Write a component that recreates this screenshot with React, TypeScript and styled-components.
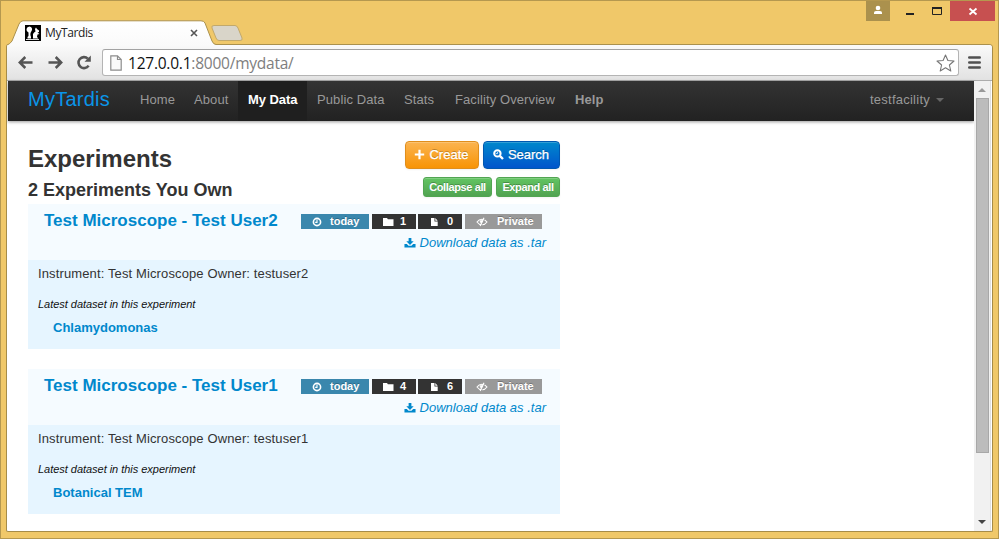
import React from "react";
import styled, { createGlobalStyle } from "styled-components";

const Global = createGlobalStyle`
  * { box-sizing: border-box; }
  html, body { margin: 0; padding: 0; }
  body { overflow: hidden; font-family: "Liberation Sans", Arial, sans-serif; font-size: 13px; color: #333; }
  svg { display: block; flex: none; }
`;

const Window = styled.div`
  width: 999px;
  height: 539px;
  display: flex;
  flex-direction: column;
  padding: 0 5px 6px 5px;
  background: #f0c869;
  border: 1px solid #b5984f;
`;

const TitleBar = styled.header`
  height: 43px;
  flex: none;
  display: flex;
  justify-content: space-between;
  align-items: flex-start;
`;

const Tabs = styled.div`
  display: flex;
  align-items: flex-start;
  height: 44px;
  padding-top: 19px;
  position: relative;
  z-index: 2;
`;

const Tab = styled.div`
  position: relative;
  width: 209px;
  height: 25px;
  display: flex;
  align-items: center;
  padding: 0 17px 0 19px;
`;

const TabShape = styled.svg`
  position: absolute;
  left: 0;
  top: 0;
  z-index: -1;
`;

const TabTitle = styled.span`
  flex: 1;
  margin-left: 4px;
  font: 12px "Open Sans", "Noto Sans", sans-serif;
  letter-spacing: -0.4px;
  color: #222;
`;

const WindowControls = styled.div`
  display: flex;
  height: 20px;
  margin-right: -2px;
`;

const Control = styled.div<{ $w: number; $bg?: string }>`
  width: ${(p) => p.$w}px;
  height: 20px;
  background: ${(p) => p.$bg || "transparent"};
`;

const Frame = styled.div`
  flex: 1;
  min-height: 0;
  width: 987px;
  display: flex;
  flex-direction: column;
  border: 1px solid #a68c48;
  border-top-color: #ab914d;
  border-radius: 3px 4px 2px 2px;
  background: #fff;
  padding: 0 0 0 1px;
  overflow: hidden;
`;

const Toolbar = styled.div`
  height: 36px;
  flex: none;
  margin-left: -1px;
  display: flex;
  align-items: flex-start;
  padding: 4px 11px 0 11px;
  background: linear-gradient(#fafafa, #e2e2e2);
  border-bottom: 1px solid #acacac;
`;

const NavIcons = styled.div`
  display: flex;
  gap: 13px;
  padding-top: 6px;
  width: 84px;
`;

const AddressBar = styled.div`
  flex: 1;
  height: 27px;
  display: flex;
  align-items: center;
  padding: 0 3px 0 7px;
  background: #fff;
  border: 1px solid #b4b4b4;
  border-top-color: #a3a3a3;
  border-radius: 3px;
`;

const Url = styled.span`
  flex: 1;
  margin-left: 6px;
  font: 15.5px/24px "Open Sans", "Noto Sans", sans-serif;
  letter-spacing: -0.23px;
  color: #7e7e7e;
  b { font-weight: 400; color: #111; }
`;

const MenuButton = styled.div`
  padding: 7px 0 0 9px;
`;

const Viewport = styled.div`
  flex: 1;
  min-height: 0;
  display: flex;
`;

const Page = styled.main`
  width: 966px;
`;

const NavBar = styled.nav`
  height: 40px;
  display: flex;
  align-items: stretch;
  padding: 0 30px 0 20px;
  background: linear-gradient(#333, #222);
  box-shadow: 0 1px 3px rgba(0, 0, 0, 0.4);
`;

const Brand = styled.a`
  width: 102px;
  font-size: 20px;
  line-height: 36px;
  letter-spacing: 0.25px;
  color: #0a95e8;
`;

const NavItem = styled.a<{ $w: number; $active?: boolean; $bold?: boolean }>`
  width: ${(p) => p.$w}px;
  padding-left: 10px;
  line-height: 37px;
  white-space: nowrap;
  letter-spacing: ${(p) => (p.$active ? -0.05 : 0.1)}px;
  font-weight: ${(p) => (p.$bold || p.$active ? 700 : 400)};
  color: ${(p) => (p.$active ? "#fff" : "#999")};
  background: ${(p) => (p.$active ? "#1f1f1f" : "transparent")};
`;

const UserMenu = styled.a`
  margin-left: auto;
  display: flex;
  gap: 6px;
  line-height: 37px;
  letter-spacing: 0.25px;
  color: #999;
`;

const Caret = styled.i`
  margin-top: 17px;
  width: 0;
  height: 0;
  border: 4px solid transparent;
  border-top-color: #666;
  border-bottom: 0;
`;

const Content = styled.section`
  width: 532px;
  margin: 20px 0 0 20px;
`;

const HeadRow = styled.div<{ $h: number }>`
  height: ${(p) => p.$h}px;
  display: flex;
  justify-content: space-between;
  align-items: flex-start;
`;

const Title = styled.h1`
  margin: 0;
  font-size: 24px;
  line-height: 35px;
`;

const SubTitle = styled.h2`
  margin: 0;
  font-size: 18px;
  line-height: 26px;
`;

const ButtonGroup = styled.div`
  display: flex;
  gap: 4px;
`;

const Button = styled.button<{ $w: number; $from: string; $to: string; $line: string }>`
  width: ${(p) => p.$w}px;
  height: 28px;
  padding: 0 1px 2px 0;
  display: flex;
  align-items: center;
  justify-content: center;
  gap: 4px;
  border: 1px solid ${(p) => p.$line};
  border-radius: 4px;
  background: linear-gradient(${(p) => p.$from}, ${(p) => p.$to});
  box-shadow: inset 0 1px 0 rgba(255, 255, 255, 0.2), 0 1px 2px rgba(0, 0, 0, 0.05);
  font: 13px "Liberation Sans", Arial, sans-serif;
  -webkit-text-stroke: 0.25px #fff;
  color: #fff;
  text-shadow: 0 -1px 0 rgba(0, 0, 0, 0.25);
`;

const SmallButton = styled(Button)`
  height: 20px;
  padding: 0 0 1px;
  border-radius: 3px;
  font-size: 11px;
  font-weight: 700;
  letter-spacing: -0.38px;
  -webkit-text-stroke: 0;
  white-space: nowrap;
`;

const Card = styled.article`
  margin-bottom: 20px;
`;

const CardHead = styled.div`
  height: 56px;
  display: flex;
  justify-content: space-between;
  padding: 0 14px 0 16px;
  background: #f5fbff;
`;

const CardTitle = styled.a`
  font-size: 17px;
  font-weight: 700;
  line-height: 33px;
  color: #08c;
`;

const Meta = styled.div`
  display: flex;
  flex-direction: column;
  align-items: flex-end;
  padding-top: 10px;
`;

const Badges = styled.div`
  display: grid;
  grid-template-columns: 68px 3px 44px 2px 44px 3px 77px;
  margin-right: 4px;
`;

const Badge = styled.span<{ $col: number; $bg: string; $gap: number; $pl: number }>`
  grid-column: ${(p) => p.$col};
  height: 15px;
  display: flex;
  align-items: center;
  gap: ${(p) => p.$gap}px;
  padding-left: ${(p) => p.$pl}px;
  background: ${(p) => p.$bg};
  color: #fff;
  font-size: 11px;
  font-weight: 700;
  line-height: 15px;
  text-shadow: 0 -1px 0 rgba(0, 0, 0, 0.25);
`;

const Download = styled.a`
  display: flex;
  align-items: center;
  gap: 4px;
  margin-top: 5px;
  line-height: 18px;
  font-style: italic;
  color: #08c;
`;

const CardBody = styled.div`
  height: 89px;
  padding: 4px 10px 0;
  background: #e6f5ff;
`;

const Description = styled.p`
  margin: 0;
  line-height: 20px;
  letter-spacing: 0.125px;
`;

const Latest = styled.p`
  margin: 10px 0 0;
  font-size: 11px;
  font-style: italic;
  line-height: 20px;
  letter-spacing: -0.03px;
  color: #111;
`;

const Dataset = styled.a`
  display: block;
  margin: 4px 0 0 15px;
  font-weight: 700;
  line-height: 20px;
  color: #08c;
`;

const Scrollbar = styled.aside`
  width: 17px;
  display: flex;
  flex-direction: column;
  align-items: center;
  background: #f1f1f1;
  border-right: 1px solid #e0e0e0;
`;

const Thumb = styled.div`
  width: 13px;
  height: 355px;
  background: #bcbcbc;
  border: 1px solid #a8a8a8;
`;

const Arrow = styled.i<{ $down?: boolean }>`
  width: 0;
  height: 0;
  margin: ${(p) => (p.$down ? "auto 0 7px" : "7px 0 6px")};
  border: 4px solid transparent;
  ${(p) =>
    p.$down
      ? "border-top-color: #444; border-bottom: 0;"
      : "border-bottom-color: #999; border-top: 0;"}
`;

const Favicon = () => (
  <svg width="16" height="16" viewBox="0 0 16 16">
    <rect width="16" height="16" fill="#000" />
    <path d="M1.500 4Q2 1.500 4.500 1.500Q7.500 2 7 5L5.500 8Q5 10 6 12V13.500H2.500V12L3.500 11V7.500L1.800 6z" fill="#fff" />
    <path d="M8 13.500V9Q9 7 10.500 6.500L10 4L11 2.500L12 4L14 5.500L14 7L12.500 7.500L14.500 9L12.500 9.500L12 12L13.500 13.500z" fill="#fff" />
    <path d="M1 14h13v1H1z" fill="#ddd" />
  </svg>
);

const Arrowed = ({ flip }: { flip?: boolean }) => (
  <svg width="16" height="15" viewBox="0 0 16 15">
    <g transform={flip ? "matrix(-1 0 0 1 16 0)" : undefined} fill="none" stroke="#555" strokeWidth="2.500">
      <path d="M1.500 7.500H14.500M7.300 2L1.800 7.500L7.300 13" />
    </g>
  </svg>
);

const Reload = () => (
  <svg width="16" height="15" viewBox="0 0 16 15">
    <path d="M12.600 10.600A5.500 5.500 0 1 1 11.800 3.600" fill="none" stroke="#555" strokeWidth="2.600" />
    <path d="M14.800 .5V6.800H8.500z" fill="#555" />
  </svg>
);

const Clock = () => (
  <svg width="10" height="10" viewBox="0 0 10 10" fill="none" stroke="#fff">
    <circle cx="5" cy="5" r="3.600" strokeWidth="1.600" />
    <path d="M5 2.500V5.400H3.200" strokeWidth="1.100" />
  </svg>
);
const Folder = () => (
  <svg width="12" height="10" viewBox="0 0 12 10">
    <path d="M1 1h4l.9 1.300h5.600V9H1z" fill="#fff" />
  </svg>
);
const FileIcon = () => (
  <svg width="9" height="10" viewBox="0 0 9 10">
    <path d="M1 1h3.500v3.500h3.200V9H1z M5.300 1L7.700 3.700H5.300z" fill="#fff" />
  </svg>
);
const EyeClosed = () => (
  <svg width="12" height="10" viewBox="0 0 12 10" fill="none" stroke="#fff">
    <path d="M1 5Q3 2.200 6 2.200Q9 2.200 11 5Q9 7.800 6 7.800Q3 7.800 1 5z" strokeWidth="1.100" />
    <circle cx="5.500" cy="4.600" r="1.400" fill="#fff" strokeWidth=".6" />
    <path d="M8.900 1L5.200 9" stroke="#999" strokeWidth="1" />
    <path d="M8 .8L4.200 9" strokeWidth="1.100" />
  </svg>
);
const DownloadIcon = () => (
  <svg width="12" height="12" viewBox="0 0 13 12" fill="#08c">
    <path d="M5 .5h3v3.700h2.500L6.500 8.200L2.500 4.200H5z" />
    <path d="M.5 7.200h2.600l1.800 1.900h3.200l1.800-1.900h2.600V11H.5z" />
  </svg>
);
const Plus = () => (
  <svg width="11" height="11" viewBox="0 0 11 11">
    <path d="M5.500 .8V10.200M.8 5.500H10.200" stroke="#fff" strokeWidth="2.200" />
  </svg>
);
const SearchIcon = () => (
  <svg width="11" height="11" viewBox="0 0 11 11" fill="none" stroke="#fff">
    <circle cx="4.400" cy="4.400" r="3.200" strokeWidth="2" />
    <path d="M6.800 6.800L10 10" strokeWidth="2.400" />
    <path d="M4.600 2.800V4.600H2.800" strokeWidth=".8" />
  </svg>
);

const experiments = [
  { user: 2, folders: 1, files: 0, dataset: "Chlamydomonas" },
  { user: 1, folders: 4, files: 6, dataset: "Botanical TEM" },
];

export default function App() {
  return (
    <Window>
      <Global />
      <TitleBar>
        <Tabs>
          <Tab>
            <TabShape width="240" height="27" viewBox="0 0 240 27">
              <defs>
                <linearGradient id="tab" x2="0" y2="1">
                  <stop stopColor="#fff" />
                  <stop offset="1" stopColor="#fafafa" />
                </linearGradient>
              </defs>
              <path d="M1 26V25Q4 24 6 21L13 4Q14.500 .8 17 .8H195Q198 .8 199 3L206 21Q207.500 24.500 210 24.500V26z" fill="url(#tab)" />
              <path d="M1 25Q4 24 6 21L13 4Q14.500 .8 17 .8H195Q198 .8 199 3L206 21Q207.500 24.500 210 24.500" fill="none" stroke="#ab914d" />
              <path d="M208 5.500H229Q231 5.500 232 8L236 18Q237 20.500 234 20.500H213Q211 20.500 210 18L206 8Q205 5.500 208 5.500z" fill="#d9d5c9" stroke="#c2a96b" />
            </TabShape>
            <Favicon />
            <TabTitle>MyTardis</TabTitle>
            <svg width="8" height="8" viewBox="0 0 8 8">
              <path d="M1 1L7 7M7 1L1 7" stroke="#555" strokeWidth="1.600" />
            </svg>
          </Tab>
        </Tabs>
        <WindowControls>
          <Control $w={24} $bg="#ab914d">
            <svg width="24" height="20" fill="#fff">
              <circle cx="12" cy="7" r="2.300" />
              <path d="M8 13V11.500Q8 10 10 10H14Q16 10 16 11.500V13z" />
            </svg>
          </Control>
          <Control $w={60}>
            <svg width="60" height="20">
              <rect x="16" y="12" width="8" height="2" fill="#222" />
              <path d="M42.500 6.500H51.500V13.500H42.500z" fill="none" stroke="#222" />
              <path d="M42 7H52" stroke="#222" strokeWidth="2" />
            </svg>
          </Control>
          <Control $w={45} $bg="#c75050">
            <svg width="45" height="20">
              <path d="M19.500 7.500L26.500 13.500M26.500 7.500L19.500 13.500" stroke="#fff" strokeWidth="1.800" />
            </svg>
          </Control>
        </WindowControls>
      </TitleBar>
      <Frame>
        <Toolbar>
          <NavIcons>
            <Arrowed />
            <Arrowed flip />
            <Reload />
          </NavIcons>
          <AddressBar>
            <svg width="12" height="16" viewBox="0 0 12 16">
              <path d="M.8 .8H7.500L11.200 4.500V15.200H.8z M7.500 .8V4.500H11.200" fill="#fafafa" stroke="#8c8c8c" strokeWidth="1.200" />
            </svg>
            <Url><b>127.0.0.1</b>:8000/mydata/</Url>
            <svg width="19" height="18" viewBox="0 0 19 18">
              <path d="M9.500 1L11.900 6.500L18 7L13.400 11L14.800 17L9.500 13.800L4.200 17L5.600 11L1 7L7.100 6.500z" fill="#fff" stroke="#777" strokeWidth="1.100" strokeLinejoin="round" />
            </svg>
          </AddressBar>
          <MenuButton>
            <svg width="13" height="13" viewBox="0 0 13 13">
              <path d="M1.300 1.500H11.700M1.300 6.500H11.700M1.300 11.500H11.700" stroke="#505050" strokeWidth="2.600" strokeLinecap="round" />
            </svg>
          </MenuButton>
        </Toolbar>
        <Viewport>
          <Page>
            <NavBar>
              <Brand>MyTardis</Brand>
              <NavItem $w={54}>Home</NavItem>
              <NavItem $w={54}>About</NavItem>
              <NavItem $w={69} $active>My Data</NavItem>
              <NavItem $w={87}>Public Data</NavItem>
              <NavItem $w={51}>Stats</NavItem>
              <NavItem $w={120}>Facility Overview</NavItem>
              <NavItem $w={50} $bold>Help</NavItem>
              <UserMenu>testfacility<Caret /></UserMenu>
            </NavBar>
            <Content>
              <HeadRow $h={36}>
                <Title>Experiments</Title>
                <ButtonGroup>
                  <Button $w={74} $from="#fbb450" $to="#f89406" $line="#e08e1c"><Plus />Create</Button>
                  <Button $w={77} $from="#0088cc" $to="#0055cc" $line="#0058b0"><SearchIcon />Search</Button>
                </ButtonGroup>
              </HeadRow>
              <HeadRow $h={27}>
                <SubTitle>2 Experiments You Own</SubTitle>
                <ButtonGroup>
                  <SmallButton $w={69} $from="#62c462" $to="#51a351" $line="#52a552">Collapse all</SmallButton>
                  <SmallButton $w={64} $from="#62c462" $to="#51a351" $line="#52a552">Expand all</SmallButton>
                </ButtonGroup>
              </HeadRow>
              {experiments.map((e) => (
                <Card key={e.user}>
                  <CardHead>
                    <CardTitle>Test Microscope - Test User{e.user}</CardTitle>
                    <Meta>
                      <Badges>
                        <Badge $col={1} $bg="#3a87ad" $gap={8} $pl={11}><Clock />today</Badge>
                        <Badge $col={3} $bg="#333" $gap={6} $pl={10}><Folder />{e.folders}</Badge>
                        <Badge $col={5} $bg="#333" $gap={8} $pl={12}><FileIcon />{e.files}</Badge>
                        <Badge $col={7} $bg="#999" $gap={9} $pl={11}><EyeClosed />Private</Badge>
                      </Badges>
                      <Download><DownloadIcon />Download data as .tar</Download>
                    </Meta>
                  </CardHead>
                  <CardBody>
                    <Description>Instrument: Test Microscope Owner: testuser{e.user}</Description>
                    <Latest>Latest dataset in this experiment</Latest>
                    <Dataset>{e.dataset}</Dataset>
                  </CardBody>
                </Card>
              ))}
            </Content>
          </Page>
          <Scrollbar>
            <Arrow />
            <Thumb />
            <Arrow $down />
          </Scrollbar>
        </Viewport>
      </Frame>
    </Window>
  );
}
